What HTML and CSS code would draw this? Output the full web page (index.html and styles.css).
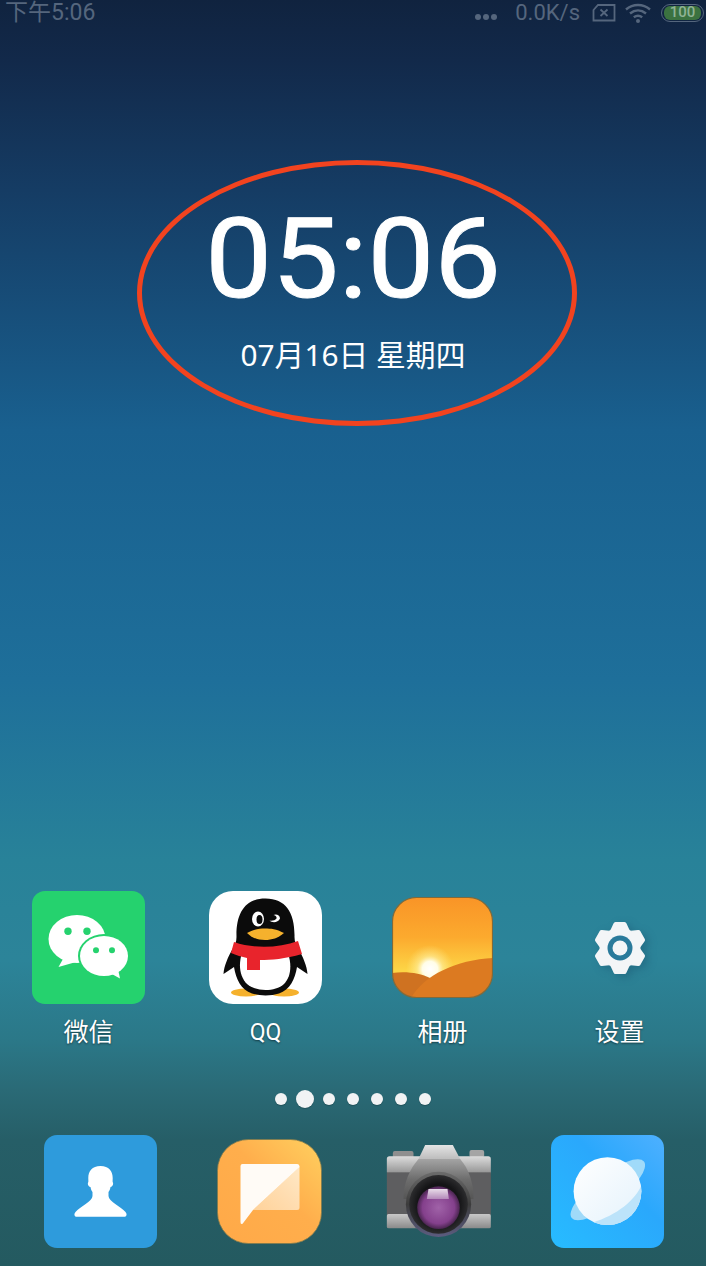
FILE: index.html
```html
<!DOCTYPE html>
<html lang="zh-CN">
<head>
<meta charset="utf-8">
<title>Home screen</title>
<link rel="stylesheet" href="styles.css">
</head>
<body>
<main class="phone">
  <header class="status">
    <span class="status-time">下午5:06</span>
    <div class="status-right">
      <svg class="more" width="22" height="6" viewBox="0 0 22 6"><circle cx="3" cy="3" r="3"/><circle cx="11" cy="3" r="3"/><circle cx="19" cy="3" r="3"/></svg>
      <span class="speed">0.0K/s</span>
      <svg class="sim" width="24" height="18" viewBox="0 0 24 18"><path d="M6 1H22.5V16.5H1.5V6Z" fill="none" stroke-width="1.8"/><path d="M8.5 5.5L15.5 12M15.5 5.5L8.5 12" fill="none" stroke-width="1.8"/></svg>
      <svg class="wifi" width="26" height="20" viewBox="0 0 26 20"><path d="M1 6.5C8 .5 18 .5 25 6.5M5 10.5C10 6.3 16 6.3 21 10.5M8.8 14.3C11.5 12.2 14.5 12.2 17.2 14.3" fill="none" stroke-width="2.4"/><circle class="wifi-dot" cx="13" cy="18" r="2"/></svg>
      <div class="battery"><span class="battery-fill"><span class="battery-text">100</span></span></div>
    </div>
  </header>

  <section class="clock">
    <div class="time">05:06</div>
    <div class="date">07月16日 星期四</div>
    <div class="circle"></div>
  </section>

  <div class="spacer"></div>

  <section class="apps">
    <div class="app">
      <div class="icon-box">
        <svg width="113" height="113" viewBox="0 0 113 113">
          <rect width="113" height="113" rx="13" fill="#25d26e"/>
          <ellipse cx="45" cy="48" rx="28.500" ry="24" fill="#fff"/>
          <path d="M31 68L26.500 76L44 71Z" fill="#fff"/>
          <ellipse cx="72" cy="65" rx="26" ry="22" fill="#25d26e"/>
          <ellipse cx="72" cy="65" rx="24" ry="20" fill="#fff"/>
          <path d="M78 82L88 87.500L86 78Z" fill="#fff"/>
          <circle cx="36" cy="40.300" r="3.700" fill="#25d26e"/>
          <circle cx="55" cy="40.300" r="3.700" fill="#25d26e"/>
          <circle cx="64" cy="59.300" r="3" fill="#25d26e"/>
          <circle cx="80" cy="59.300" r="3" fill="#25d26e"/>
        </svg>
      </div>
      <span class="label">微信</span>
    </div>
    <div class="app">
      <div class="icon-box">
        <svg width="113" height="113" viewBox="0 0 113 113">
          <rect width="113" height="113" rx="24" fill="#fff"/>
          <ellipse cx="37" cy="101.500" rx="15" ry="4" fill="#f5b12d"/>
          <ellipse cx="75" cy="101.500" rx="15" ry="4" fill="#f5b12d"/>
          <path d="M56.500 7.500C36 7.500 27 22 27.500 46C27.500 51 26 54 23 59C19 66 15 75 14.500 83L25 76C27 88 32 99 43 102.500C51 105 62 105 70 102.500C81 99 86 88 88 76L98.500 83C98 75 94 66 90 59C87 54 85.500 51 85.500 46C86 22 77 7.500 56.500 7.500Z" fill="#0b0b0b"/>
          <path d="M33 62H79C83 74 82 86 75 93C66 101 47 101 38 93C31 86 29 74 33 62Z" fill="#fff"/>
          <path d="M25 51C45 58 70 57 89 50L93 63C76 68 62 69 51 69V79H38V67C33 66 27 64 22 62Z" fill="#e8242c"/>
          <ellipse cx="49" cy="28" rx="6" ry="7.500" fill="#fff"/>
          <ellipse cx="50.500" cy="28.500" rx="3" ry="4.500" fill="#0b0b0b"/>
          <path d="M60.500 29.500C63 32 69 32 71 27.500C71 24 67 22.500 64.500 24C67 24.500 68 26 67.500 27.500C66 29.500 63 30 60.500 29.500Z" fill="#fff"/>
          <path d="M38 42C46 38 50 37.500 56 37.500C62 37.500 67 38 75 42C69 47 63 49 56 49C49 49 43 47 38 42Z" fill="#f5b12d"/>
        </svg>
      </div>
      <span class="label label-latin">QQ</span>
    </div>
    <div class="app">
      <div class="icon-box">
        <svg width="101" height="101" viewBox="0 0 101 101">
          <defs>
            <linearGradient id="sky" x1="0" y1="0" x2="0" y2="1">
              <stop offset="0" stop-color="#f99427"/>
              <stop offset=".4" stop-color="#fcaa2e"/>
              <stop offset=".72" stop-color="#fdd445"/>
            </linearGradient>
            <radialGradient id="sun" cx="38" cy="72" r="24" gradientUnits="userSpaceOnUse">
              <stop offset="0" stop-color="#fff"/>
              <stop offset=".32" stop-color="#fffde8"/>
              <stop offset=".55" stop-color="#fff0a0" stop-opacity=".6"/>
              <stop offset="1" stop-color="#ffe680" stop-opacity="0"/>
            </radialGradient>
            <clipPath id="squircle"><rect x=".5" y=".5" width="100" height="100" rx="24"/></clipPath>
          </defs>
          <g clip-path="url(#squircle)">
            <rect width="101" height="101" fill="url(#sky)"/>
            <circle cx="38" cy="72" r="24" fill="url(#sun)"/>
            <path d="M0 76C14 74 28 76 38 81C44 84 40 101 20 101H0Z" fill="#cf7221"/>
            <path d="M19 101C32 78 64 63 101 61V101Z" fill="#dc7a21"/>
          </g>
          <rect x=".5" y=".5" width="100" height="100" rx="24" fill="none" stroke="#7f6a3c" stroke-width="1.200"/>
        </svg>
      </div>
      <span class="label">相册</span>
    </div>
    <div class="app">
      <div class="icon-box">
        <svg class="gear" width="60" height="60" viewBox="-30 -30 60 60">
          <g fill="#f3f5f7">
            <circle r="20.500"/>
            <path d="M-9.500 -18L-6.500 -24.500Q-6 -26 -4.500 -26H4.500Q6 -26 6.500 -24.500L9.500 -18Z"/>
            <path transform="rotate(60)" d="M-9.500 -18L-6.500 -24.500Q-6 -26 -4.500 -26H4.500Q6 -26 6.500 -24.500L9.500 -18Z"/>
            <path transform="rotate(120)" d="M-9.500 -18L-6.500 -24.500Q-6 -26 -4.500 -26H4.500Q6 -26 6.500 -24.500L9.500 -18Z"/>
            <path transform="rotate(180)" d="M-9.500 -18L-6.500 -24.500Q-6 -26 -4.500 -26H4.500Q6 -26 6.500 -24.500L9.500 -18Z"/>
            <path transform="rotate(240)" d="M-9.500 -18L-6.500 -24.500Q-6 -26 -4.500 -26H4.500Q6 -26 6.500 -24.500L9.500 -18Z"/>
            <path transform="rotate(300)" d="M-9.500 -18L-6.500 -24.500Q-6 -26 -4.500 -26H4.500Q6 -26 6.500 -24.500L9.500 -18Z"/>
          </g>
          <circle r="12.500" fill="#2a7a9b"/>
          <circle r="7.500" fill="#f3f5f7"/>
        </svg>
      </div>
      <span class="label">设置</span>
    </div>
  </section>

  <nav class="dots">
    <span class="dot-slot"><i class="dot"></i></span>
    <span class="dot-slot"><i class="dot dot-active"></i></span>
    <span class="dot-slot"><i class="dot"></i></span>
    <span class="dot-slot"><i class="dot"></i></span>
    <span class="dot-slot"><i class="dot"></i></span>
    <span class="dot-slot"><i class="dot"></i></span>
    <span class="dot-slot"><i class="dot"></i></span>
  </nav>

  <section class="dock">
    <div class="icon-box">
      <svg width="113" height="113" viewBox="0 0 113 113">
        <rect width="113" height="113" rx="13" fill="#2e9bdc"/>
        <path d="M56.500 31C48 31 44.300 36 44.300 43C44.300 45 44.500 46 44.300 47C43.300 48.500 44 51.500 46.500 52C47 54.500 47.500 55.500 48.500 57V61C48.500 66 36 72 31.500 77C29.500 79.500 30.500 81.800 33 81.800H80C82.500 81.800 83.500 79.500 81.500 77C77 72 64.500 66 64.500 61V57C65.500 55.500 66 54.500 66.500 52C69 51.500 69.700 48.500 68.700 47C68.500 46 68.700 45 68.700 43C68.700 36 65 31 56.500 31Z" fill="#fff"/>
      </svg>
    </div>
    <div class="icon-box">
      <svg width="105" height="105" viewBox="0 0 105 105">
        <defs>
          <linearGradient id="msgbg" x1="0" y1="1" x2="1" y2="0">
            <stop offset="0" stop-color="#ffa948"/>
            <stop offset=".55" stop-color="#ffae4c"/>
            <stop offset="1" stop-color="#ffd05f"/>
          </linearGradient>
          <linearGradient id="msgfold" x1="0" y1="1" x2="1" y2="0">
            <stop offset="0" stop-color="#ffd9a8" stop-opacity=".85"/>
            <stop offset="1" stop-color="#fff0da" stop-opacity=".85"/>
          </linearGradient>
        </defs>
        <rect x=".5" y=".5" width="104" height="104" rx="31" fill="url(#msgbg)" stroke="#7d7a4e" stroke-width=".8"/>
        <path d="M36 71H80Q82.500 71 82.500 68.500V28Q82.500 26 80 30Z" fill="url(#msgfold)"/>
        <path d="M25.500 25H80Q82.500 25 82.500 28L36 71L25.800 84.500Q23.500 86 23.500 83V27Q23.500 25 25.500 25Z" fill="#fffbf6"/>
      </svg>
    </div>
    <div class="icon-box">
      <svg class="camera" width="107" height="95" viewBox="75 75 320 285">
        <defs>
          <linearGradient id="camtop" x1="0" y1="0" x2="0" y2="1">
            <stop offset="0" stop-color="#dcdcdc"/>
            <stop offset="1" stop-color="#8f8f8f"/>
          </linearGradient>
          <linearGradient id="cambase" x1="0" y1="0" x2="0" y2="1">
            <stop offset="0" stop-color="#c8c8c8"/>
            <stop offset="1" stop-color="#8a8a8a"/>
          </linearGradient>
          <linearGradient id="camprism" x1="0" y1="0" x2="0" y2="1">
            <stop offset="0" stop-color="#e4e4e4"/>
            <stop offset="1" stop-color="#bdbdbd"/>
          </linearGradient>
          <linearGradient id="camhump" x1="0" y1="0" x2="0" y2="1">
            <stop offset="0" stop-color="#a4a4a4"/>
            <stop offset=".5" stop-color="#6e6e6e"/>
            <stop offset="1" stop-color="#555"/>
          </linearGradient>
          <linearGradient id="camring" x1="0" y1="0" x2="0" y2="1">
            <stop offset="0" stop-color="#6c6c6c"/>
            <stop offset=".5" stop-color="#3c3c3c"/>
            <stop offset="1" stop-color="#5c5c80"/>
          </linearGradient>
          <radialGradient id="caminner" cx=".5" cy=".5" r=".5">
            <stop offset=".7" stop-color="#141416"/>
            <stop offset="1" stop-color="#2c2c2e"/>
          </radialGradient>
          <radialGradient id="camlens" cx=".5" cy=".5" r=".5">
            <stop offset="0" stop-color="#a062a8"/>
            <stop offset=".75" stop-color="#84408c"/>
            <stop offset="1" stop-color="#4a2550"/>
          </radialGradient>
          <linearGradient id="camglare" x1="0" y1="0" x2="0" y2="1">
            <stop offset="0" stop-color="#e8dce8"/>
            <stop offset="1" stop-color="#b48aba"/>
          </linearGradient>
        </defs>
        <rect x="98" y="96" width="62" height="22" rx="6" fill="#8f8f8f"/>
        <rect x="328" y="93" width="44" height="22" rx="6" fill="#a5a5a5"/>
        <rect x="80" y="112" width="312" height="54" rx="8" fill="url(#camtop)"/>
        <rect x="80" y="160" width="312" height="128" fill="#5e5e60"/>
        <rect x="80" y="285" width="312" height="43" rx="5" fill="url(#cambase)"/>
        <path d="M175 120H300C326 150 340 190 340 240H130C130 190 149 150 175 120Z" fill="url(#camhump)"/>
        <path d="M195 78H278L300 120H175Z" fill="url(#camprism)"/>
        <circle cx="235" cy="256" r="98" fill="url(#camring)"/>
        <circle cx="235" cy="256" r="88" fill="url(#caminner)"/>
        <circle cx="235" cy="266" r="64" fill="url(#camlens)"/>
        <path d="M205 210H262L266 240H200Z" fill="url(#camglare)"/>
      </svg>
    </div>
    <div class="icon-box">
      <svg width="113" height="113" viewBox="570 45 340 340">
        <defs>
          <linearGradient id="brbg" x1="0" y1="1" x2="1" y2="0">
            <stop offset="0" stop-color="#27bcff"/>
            <stop offset=".6" stop-color="#2aa8fc"/>
            <stop offset="1" stop-color="#4eb0ff"/>
          </linearGradient>
          <linearGradient id="planet" x1="0" y1="0" x2="1" y2="1">
            <stop offset="0" stop-color="#ffffff"/>
            <stop offset="1" stop-color="#e4f2fc"/>
          </linearGradient>
          <clipPath id="planetclip"><circle cx="740" cy="214" r="102"/></clipPath>
        </defs>
        <rect x="570" y="45" width="340" height="340" rx="39" fill="url(#brbg)"/>
        <ellipse cx="741" cy="210" rx="138" ry="44" transform="rotate(-38 741 210)" fill="#a0daf9"/>
        <circle cx="740" cy="214" r="102" fill="url(#planet)"/>
        <path d="M845 190C825 240 770 285 695 308L740 335L850 280Z" clip-path="url(#planetclip)" fill="#bce3fa"/>
      </svg>
    </div>
  </section>
</main>
</body>
</html>
```
FILE: styles.css
```css
* {
  box-sizing: border-box;
}

html, body {
  margin: 0;
  padding: 0;
}

body {
  width: 706px;
  height: 1266px;
  overflow: hidden;
  font-family: "Noto Sans", "Noto Sans CJK SC", sans-serif;
}

.phone {
  width: 706px;
  height: 1266px;
  overflow: hidden;
  display: flex;
  flex-direction: column;
  color: #fff;
  background: linear-gradient(180deg,
    #10233f 0,
    #12294a 60px,
    #153c64 190px,
    #19608f 430px,
    #1e6f9a 680px,
    #288299 860px,
    #2c8499 960px,
    #2b7888 1040px,
    #2a6a76 1090px,
    #265e67 1140px,
    #245a60 1266px);
}

.status {
  height: 24px;
  flex: none;
  display: flex;
  align-items: center;
  justify-content: space-between;
  padding: 1px 2px 0 5px;
  color: #55667d;
  fill: #55667d;
  stroke: #55667d;
}

.status-time {
  font-family: "Roboto", "Noto Sans CJK SC", sans-serif;
  font-size: 23px;
  line-height: 23px;
}

.status-right {
  display: flex;
  align-items: center;
}

.more {
  stroke: none;
  margin: 8px 18px 0 0;
}

.speed {
  font-family: "Roboto", sans-serif;
  font-size: 22px;
  line-height: 23px;
  margin-right: 12px;
}

.sim {
  margin-right: 9px;
}

.wifi {
  margin-right: 10px;
}

.wifi-dot {
  stroke: none;
}

.battery {
  width: 43px;
  height: 18px;
  border: 1.500px solid #55667d;
  border-radius: 9px;
  padding: 1px 2px;
  display: flex;
}

.battery-fill {
  flex: 1;
  border-radius: 6px;
  background: #3b7240;
  display: flex;
  align-items: center;
  justify-content: center;
}

.battery-text {
  font-family: "Roboto", sans-serif;
  font-size: 15px;
  font-weight: 500;
  line-height: 13px;
  color: #8fb395;
}

.clock {
  position: relative;
  display: flex;
  flex-direction: column;
  align-items: center;
  padding-top: 173px;
}

.time {
  font-family: "Roboto", sans-serif;
  font-size: 111px;
  font-weight: 400;
  line-height: 124px;
  -webkit-text-stroke: 1px #fff;
  transform: scaleX(1.070);
}

.date {
  font-size: 29.800px;
  line-height: 40px;
  margin-top: 14px;
}

.circle {
  position: absolute;
  left: 137px;
  top: 136px;
  width: 440px;
  height: 266px;
  border: 5px solid #f2431f;
  border-radius: 50%;
}

.spacer {
  flex: 1;
}

.apps {
  flex: none;
  display: grid;
  grid-template-columns: repeat(4, 177px);
}

.app {
  display: flex;
  flex-direction: column;
  align-items: center;
}

.icon-box {
  height: 113px;
  display: flex;
  align-items: center;
  justify-content: center;
}

.gear {
  filter: drop-shadow(4px 3px 4px rgba(20, 70, 100, .35));
}

.camera {
  filter: blur(.4px);
}

.label {
  font-family: "Roboto", "Noto Sans CJK SC", sans-serif;
  font-size: 25px;
  line-height: 28px;
  margin-top: 15px;
  text-shadow: 0 1px 2px rgba(0, 0, 0, .5);
}

.label-latin {
  font-size: 23px;
}

.dots {
  flex: none;
  display: flex;
  justify-content: center;
  margin-top: 40px;
}

.dot-slot {
  width: 24px;
  height: 24px;
  display: flex;
  align-items: center;
  justify-content: center;
}

.dot {
  width: 12px;
  height: 12px;
  border-radius: 50%;
  background: #f1f3f4;
  box-shadow: 0 1px 1px rgba(0, 0, 0, .2);
}

.dot-active {
  width: 18px;
  height: 18px;
}

.dock {
  flex: none;
  display: grid;
  grid-template-columns: repeat(4, 169px);
  margin: 24px 0 18px;
  padding-left: 16px;
}
```
